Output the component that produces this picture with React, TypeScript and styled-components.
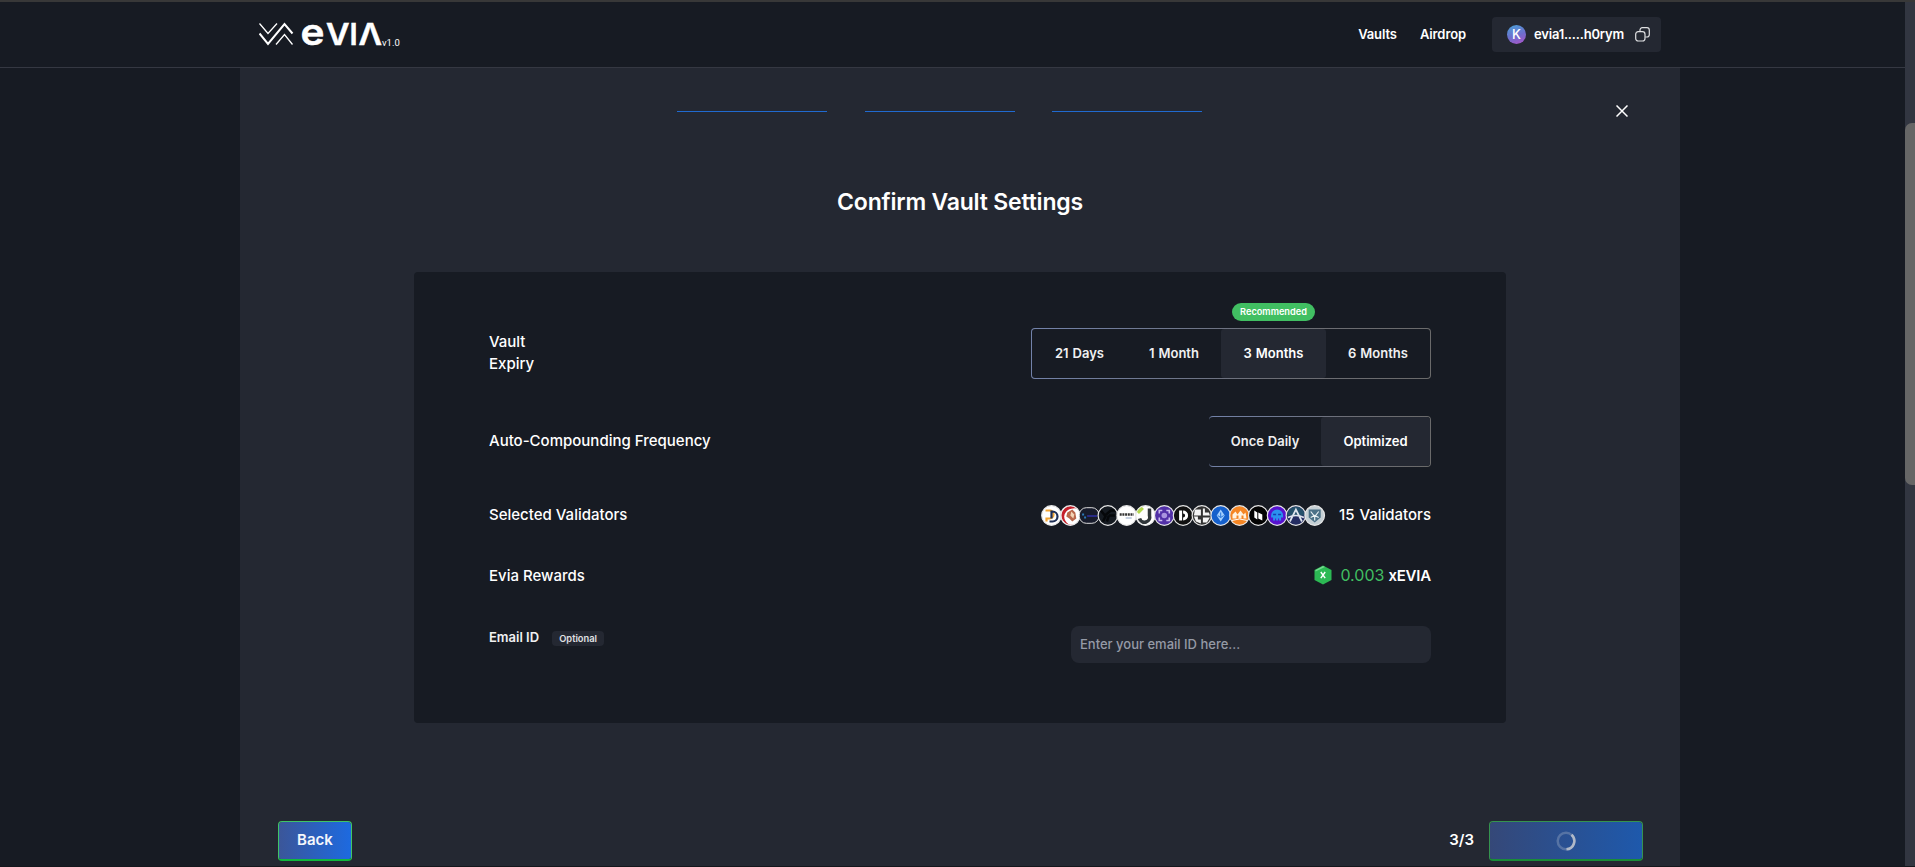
import React from "react";
import styled, { createGlobalStyle, css } from "styled-components";

const GlobalStyle = createGlobalStyle`
  * { box-sizing: border-box; }
  html, body { margin: 0; padding: 0; background: #171b23; }
  body { overflow: hidden; font-family: Inter, "Liberation Sans", sans-serif; color: #fff; }
  button, input { font-family: inherit; }
`;

const Screen = styled.div`
  width: 1915px;
  height: 867px;
  display: flex;
  overflow: hidden;
  border-top: 2px solid #383838;
  border-bottom: 1px solid #14161c;
  background: #171b23;
`;

const Page = styled.div`
  flex: 1;
  display: flex;
  flex-direction: column;
  align-items: center;
`;

const ScrollTrack = styled.div`
  width: 10px;
  padding-top: 121px;
  background: #323641;
`;

const ScrollThumb = styled.div`
  height: 362px;
  border-radius: 7px 0 0 7px;
  background: #666;
`;

const Header = styled.header`
  width: 100%;
  height: 66px;
  flex: none;
  display: flex;
  justify-content: space-between;
  padding: 15px 244px 0 259px;
  border-bottom: 1px solid #353842;
`;

const Brand = styled.div`
  display: flex;
  align-items: flex-start;
  padding-top: 5px;
`;

const Wordmark = styled.svg`
  margin: -14px 0;
`;

const Version = styled.span`
  margin: 15px 0 0 -1px;
  font-family: Roboto, sans-serif;
  font-size: 9.5px;
  line-height: 12px;
`;

const Nav = styled.nav`
  display: flex;
  align-items: flex-start;
`;

const NavLink = styled.a`
  margin-right: 23px;
  font-size: 13px;
  font-weight: 600;
  letter-spacing: -0.1px;
  line-height: 35px;
`;

const Wallet = styled.div`
  width: 169px;
  height: 35px;
  display: flex;
  align-items: center;
  margin-left: 3px;
  padding: 0 11px 0 15px;
  border-radius: 4px;
  background: #242832;
`;

const Avatar = styled.span`
  width: 19px;
  height: 19px;
  border-radius: 50%;
  background: linear-gradient(160deg, #4f9ad6 10%, #6f6dcd 55%, #b052c8);
  font-size: 13px;
  font-weight: 500;
  line-height: 19px;
  text-align: center;
`;

const Address = styled.span`
  flex: 1;
  margin-left: 8px;
  padding-bottom: 1px;
  font-size: 13px;
  font-weight: 600;
  letter-spacing: -0.2px;
`;

const Panel = styled.main`
  width: 1440px;
  margin-left: 15px;
  flex: 1;
  display: flex;
  flex-direction: column;
  align-items: center;
  background: #242832;
`;

const Steps = styled.div`
  align-self: stretch;
  height: 87px;
  display: flex;
  align-items: center;
  gap: 37.5px;
  padding: 0 52px 0 437px;
`;

const Step = styled.span`
  flex: none;
  width: 150px;
  height: 1px;
  background: #206ad0;
`;

const Close = styled.svg`
  margin: -1px 0 0 auto;
`;

const Title = styled.h1`
  margin: 31px 0 0;
  font-size: 23px;
  font-weight: 600;
  letter-spacing: -0.2px;
  line-height: 32px;
`;

const Card = styled.section`
  width: 1092px;
  height: 451px;
  margin-top: 54px;
  padding: 56px 75px 0;
  border-radius: 4px;
  background: #171b23;
`;

const Row = styled.div<{ $h: number; $gap?: number }>`
  display: flex;
  justify-content: space-between;
  align-items: center;
  height: ${(p) => p.$h}px;
  margin-top: ${(p) => p.$gap ?? 0}px;
`;

const Label = styled.span<{ $narrow?: boolean; $lift?: number }>`
  font-size: 15px;
  font-weight: 500;
  line-height: 22px;
  padding-bottom: ${(p) => p.$lift ?? 0}px;
  ${(p) => p.$narrow && css`width: 60px;`}
`;

const Segments = styled.div<{ $open?: boolean }>`
  height: 51px;
  display: flex;
  border-radius: 4px;
  background: linear-gradient(#171b23, #171b23) padding-box,
    linear-gradient(100deg, #7383ab, #6c6e76 60%, #6a6a6a) border-box;
  border: 1px solid transparent;
  border-left-width: ${(p) => (p.$open ? 0 : 1)}px;
`;

const Segment = styled.button<{ $w: number; $active?: boolean }>`
  position: relative;
  width: ${(p) => p.$w}px;
  height: 49px;
  padding: 0 0 2px;
  border: 0;
  border-radius: 3px;
  background: ${(p) => (p.$active ? "#242832" : "transparent")};
  color: ${(p) => (p.$active ? "#fff" : "#f0f0f1")};
  font-size: 13px;
  font-weight: 600;
  word-spacing: 0.7px;
`;

const Recommended = styled.span`
  position: absolute;
  top: -26px;
  left: 11px;
  width: 83px;
  height: 18px;
  border-radius: 9px;
  background: #41bf62;
  color: #fff;
  font-size: 9.2px;
  line-height: 18px;
`;

const Validators = styled.div`
  display: flex;
  align-items: center;
  gap: 13px;
  word-spacing: 1px;
`;

const Amount = styled.div`
  display: flex;
  align-items: center;
  padding-bottom: 2px;
  font-size: 15px;
  font-weight: 600;
  letter-spacing: -0.2px;
`;

const Green = styled.span`
  margin: 0 4px 0 8px;
  color: #41bf62;
  font-size: 16px;
  font-weight: 400;
  letter-spacing: 0;
`;

const EmailRow = styled(Row)`
  align-items: flex-start;
`;

const EmailLabel = styled.div`
  display: flex;
  align-items: center;
  gap: 13px;
  margin-top: 2px;
  font-size: 13px;
  font-weight: 600;
  color: #f0f0f1;
`;

const Optional = styled.span`
  width: 52px;
  height: 15px;
  margin-top: 3px;
  border-radius: 4px;
  background: #242832;
  color: #e0e1e3;
  font-size: 9.3px;
  line-height: 15px;
  text-align: center;
`;

const EmailInput = styled.input`
  width: 360px;
  height: 37px;
  padding: 0 10px 1px 9px;
  border: 0;
  border-radius: 8px;
  background: #242832;
  color: #fff;
  font-size: 13px;
  font-weight: 500;
  &::placeholder { color: #959aa6; opacity: 1; }
`;

const Footer = styled.footer`
  align-self: stretch;
  display: flex;
  align-items: center;
  margin-top: 98px;
  padding: 0 37px 0 38px;
`;

const Action = styled.button<{ $w: number; $busy?: boolean }>`
  width: ${(p) => p.$w}px;
  height: 40px;
  display: flex;
  align-items: center;
  justify-content: center;
  padding: 0 0 ${(p) => (p.$busy ? 0 : 2)}px;
  border: 1px solid ${(p) => (p.$busy ? "#35944f" : "#3fc566")};
  border-bottom: 2px solid ${(p) => (p.$busy ? "#188c38" : "#10b83c")};
  border-radius: 4px;
  background: ${(p) =>
    p.$busy ? "linear-gradient(90deg, #354878, #1e59ac)" : "linear-gradient(90deg, #3b5699, #1d6ae0)"};
  background-clip: padding-box;
  color: #f5f7fb;
  font-size: 15px;
  font-weight: 600;
`;

const Counter = styled.span`
  margin: 0 15px 0 auto;
  padding-bottom: 3px;
  font-size: 15px;
  font-weight: 600;
`;

const Logo = () => (
  <Wordmark width="124" height="54" viewBox="0 -14 124 54">
    <g fill="none" stroke="#fff">
      <path d="M0.5 1.5 9 11.5 18 1.5" strokeWidth="1.3" />
      <path d="M0.5 11.5 9 22 25.5 2 33.5 11.5" strokeWidth="2" />
      <path d="M17 22.5 25.5 12.5 33.5 22.5" strokeWidth="1.3" />
    </g>
    <g fill="#fff" stroke="#fff" strokeWidth="0.5" fontFamily="Inter" fontWeight="600" fontSize="29.5">
      <text x="41.5" y="22.7" fontSize="37" textLength="24" lengthAdjust="spacingAndGlyphs">e</text>
      <text x="67" y="23.2" textLength="23.5" lengthAdjust="spacingAndGlyphs">V</text>
      <text x="90.5" y="23.2">I</text>
      <text x="99.5" y="23.2" textLength="23.5" lengthAdjust="spacingAndGlyphs">Λ</text>
    </g>
  </Wordmark>
);

type Mark = { bg: string; art: React.ReactNode; flat?: boolean };

const marks: Mark[] = [
  {
    bg: "#fff",
    art: (
      <g fill="none" strokeWidth="2.2">
        <path d="M-6-5H-2A4 4 0 0 1-2 3H-5V6" stroke="#f3a532" />
        <path d="M-2 6H1A5 5 0 0 0 1-4H0V3" stroke="#1f2f55" />
      </g>
    ),
  },
  {
    bg: "#fff",
    art: (
      <g>
        <path d="M7-7A9.5 9.5 0 1 0 4 9 8 8 0 0 1-4-4Q0-8 7-7Z" fill="#c5202b" />
        <path d="M-3-3 2-6 5-3 6 3 2 6-1 3-4 1Z" fill="#b9674b" />
        <path d="M1-4 4-1 3 3 0 0Z" fill="#f3d3b4" />
      </g>
    ),
  },
  {
    bg: "#171b2b",
    flat: true,
    art: (
      <g>
        <path d="M-7-2H-5V0H-7ZM-5 1H-3V3H-5Z" fill="#2b78b7" />
        <path d="M-2-.5H8V1.5H-2Z" fill="#282a86" />
      </g>
    ),
  },
  { bg: "#151a21", art: <path d="M-7-5-3 0 3-5H8M-2 0-5 6M1 0H7M1 0-1 6" stroke="#05070a" strokeWidth="2.5" fill="none" /> },
  {
    bg: "#fff",
    art: (
      <g>
        <path d="M-7-1H7" stroke="#333" strokeWidth="2.5" strokeDasharray="2 .7" />
        <path d="M-1 2.5H5" stroke="#8fa5c4" strokeWidth="1" />
      </g>
    ),
  },
  {
    bg: "#fff",
    art: (
      <g fill="none">
        <path d="M4-7V0A5 5 0 0 1-6 3" stroke="#30363a" strokeWidth="3.5" />
        <path d="M-8-3-3-8" stroke="#b2d84d" strokeWidth="4" />
      </g>
    ),
  },
  {
    bg: "#5230a7",
    art: (
      <g>
        <path d="M-2-5H-5V-2M2-5H5V-2M-2 5H-5V2M2 5H5V2" fill="none" stroke="#cbbcf0" strokeWidth="1.6" />
        <circle r="2.8" fill="#a994df" />
      </g>
    ),
  },
  { bg: "#111", art: <path d="M-4-5H-1V5H-4ZM0-5A5 5 0 0 1 0 5V2A2 2 0 0 0 0-2Z" fill="#fff" /> },
  {
    bg: "#333",
    art: <path d="M-7-6H-1V0H-8ZM1-7H3V-3H7L8 0H1ZM-8 1H-4V4H-1V8L-6 6ZM1 2H8L5 7H1Z" fill="#f4f4f4" />,
  },
  {
    bg: "#1560cc",
    art: (
      <g>
        <path d="M0-6 4 0 0 6-4 0Z" fill="#a6d1ff" />
        <path d="M-3 0 0 2 3 0M0-3V2" stroke="#2875d8" fill="none" />
      </g>
    ),
  },
  {
    bg: "#f58624",
    art: (
      <g>
        <path d="M-7 3V-1L-4-4-2-1 1-5 4-1 6-3 7 3H4V0H2V3H-1V0H-3V3Z" fill="#fff2df" />
        <path d="M-8 5Q0 2 8 5" stroke="#fff" fill="none" />
      </g>
    ),
  },
  { bg: "#030303", art: <path d="M-4-5-1-3V4L-4 2ZM0-3 4-1V5L0 3Z" fill="#fff" /> },
  {
    bg: "#5712cf",
    art: (
      <g>
        <path d="M-6 0A6 6 0 0 1 6 0V2H4V5H2V3H1V5H-1V3H-2V5H-4V2H-6Z" fill="#2b91ef" />
        <path d="M-4-1H-1M1-1H4" stroke="#163bb2" strokeWidth="1.5" />
      </g>
    ),
  },
  {
    bg: "#242d62",
    art: (
      <g>
        <path d="M-9 0A9 9 0 0 1 9 0Z" fill="#25506b" />
        <path d="M-6 6 0-6 6 6M-8 2Q0-2 8 2" fill="none" stroke="#dfe5ee" strokeWidth="1.7" />
      </g>
    ),
  },
  {
    bg: "#c5d0d5",
    art: (
      <g>
        <path d="M-6-6H6V2L0 7-6 2Z" fill="#4b7187" />
        <path d="M-4-4 0 1 4-4M0 0V5M-4 2 0 0 4 2" fill="none" stroke="#e8f0f2" strokeWidth="1.2" />
      </g>
    ),
  },
];

const ValidatorStack = () => (
  <svg width="285" height="22" viewBox="0 0 285 22">
    {marks.map((m, i) => (
      <g key={i} transform={`translate(${10.5 + i * 18.8} 11.5)`}>
        {m.flat ? (
          <rect x="-9.8" y="-7.8" width="19.6" height="15.6" rx="7" fill={m.bg} />
        ) : (
          <circle r="9.8" fill={m.bg} />
        )}
        {m.art}
        {m.flat ? (
          <rect x="-9.8" y="-7.8" width="19.6" height="15.6" rx="7" fill="none" stroke="#dcdcdc" />
        ) : (
          <circle r="9.8" fill="none" stroke="#e6e6e6" strokeWidth="1.2" />
        )}
      </g>
    ))}
  </svg>
);

const HexCoin = () => (
  <svg width="18" height="20" viewBox="0 0 18 20">
    <path d="M9 .5 17.5 5V15L9 19.5.5 15V5Z" fill="#2cb954" />
    <path d="M9 1 1.5 5V6.5L11 2Z" fill="#73d98e" />
    <path d="M6.8 7 11.2 13.2M11.2 7 6.8 13.2" stroke="#fff" strokeWidth="1.4" />
  </svg>
);

const CopyIcon = () => (
  <svg width="15" height="15" viewBox="0 0 15 15" fill="none" stroke="#dedfe1" strokeWidth="1.2">
    <rect x=".7" y="4.7" width="9.3" height="9.3" rx="2.5" />
    <path d="M5 4.5V3A2.3 2.3 0 0 1 7.3.7H12A2.3 2.3 0 0 1 14.3 3V7.5A2.3 2.3 0 0 1 12 10H10.3" />
  </svg>
);

const Spinner = () => (
  <svg width="20" height="20" viewBox="0 0 20 20" fill="none" strokeWidth="2.5">
    <circle cx="10" cy="10" r="8.3" stroke="#5673a4" />
    <path d="M15.5 3.8A8.3 8.3 0 0 1 10.5 18.3" stroke="#b0b9c8" />
  </svg>
);

export default function App() {
  return (
    <>
      <GlobalStyle />
      <Screen>
        <Page>
          <Header>
            <Brand>
              <Logo />
              <Version>v1.0</Version>
            </Brand>
            <Nav>
              <NavLink>Vaults</NavLink>
              <NavLink>Airdrop</NavLink>
              <Wallet>
                <Avatar>K</Avatar>
                <Address>evia1.....h0rym</Address>
                <CopyIcon />
              </Wallet>
            </Nav>
          </Header>
          <Panel>
            <Steps>
              <Step />
              <Step />
              <Step />
              <Close width="12" height="12" viewBox="0 0 12 12">
                <path d="M.5.5 11.5 11.5M11.5.5.5 11.5" stroke="#fff" strokeWidth="1.5" />
              </Close>
            </Steps>
            <Title>Confirm Vault Settings</Title>
            <Card>
              <Row $h={51}>
                <Label $narrow $lift={2}>Vault Expiry</Label>
                <Segments>
                  <Segment $w={95}>21 Days</Segment>
                  <Segment $w={94}>1 Month</Segment>
                  <Segment $w={105} $active>
                    3 Months
                    <Recommended>Recommended</Recommended>
                  </Segment>
                  <Segment $w={104}>6 Months</Segment>
                </Segments>
              </Row>
              <Row $h={51} $gap={37}>
                <Label $lift={2}>Auto-Compounding Frequency</Label>
                <Segments $open>
                  <Segment $w={112}>Once Daily</Segment>
                  <Segment $w={109} $active>Optimized</Segment>
                </Segments>
              </Row>
              <Row $h={24} $gap={36}>
                <Label>Selected Validators</Label>
                <Validators>
                  <ValidatorStack />
                  <Label>15 Validators</Label>
                </Validators>
              </Row>
              <Row $h={24} $gap={37}>
                <Label>Evia Rewards</Label>
                <Amount>
                  <HexCoin />
                  <Green>0.003</Green>
                  xEVIA
                </Amount>
              </Row>
              <EmailRow $h={37} $gap={38}>
                <EmailLabel>
                  Email ID
                  <Optional>Optional</Optional>
                </EmailLabel>
                <EmailInput placeholder="Enter your email ID here..." />
              </EmailRow>
            </Card>
            <Footer>
              <Action $w={74}>Back</Action>
              <Counter>3/3</Counter>
              <Action $w={154} $busy aria-label="Confirming">
                <Spinner />
              </Action>
            </Footer>
          </Panel>
        </Page>
        <ScrollTrack>
          <ScrollThumb />
        </ScrollTrack>
      </Screen>
    </>
  );
}
